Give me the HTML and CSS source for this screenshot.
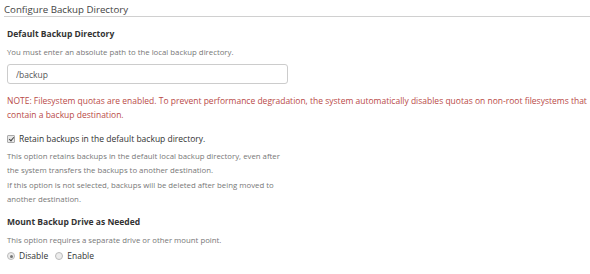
FILE: index.html
```html
<!DOCTYPE html>
<html>
  <head>
    <title>Configure Backup Directory</title>
    <link rel="stylesheet" href="styles.css">
  </head>
  <body>
    <h2 class="section-title">Configure Backup Directory</h2>

    <div class="form-group first">
      <label class="field-label" for="backupdir">Default Backup Directory</label>
      <p class="help">You must enter an absolute path to the local backup directory.</p>
      <input class="text-input" id="backupdir" type="text" value="/backup">
    </div>

    <p class="note">NOTE: Filesystem quotas are enabled. To prevent performance degradation, the system automatically disables quotas on non-root filesystems that contain a backup destination.</p>

    <div class="form-group">
      <label class="check-label">
        <input type="checkbox" checked>
        Retain backups in the default backup directory.
      </label>
      <p class="help para">This option retains backups in the default local backup directory, even after<br>the system transfers the backups to another destination.</p>
      <p class="help para next">If this option is not selected, backups will be deleted after being moved to<br>another destination.</p>
    </div>

    <div class="form-group mount">
      <label class="field-label">Mount Backup Drive as Needed</label>
      <p class="help">This option requires a separate drive or other mount point.</p>
      <div class="radios">
        <label class="radio-label"><input type="radio" name="mount" checked> Disable</label>
        <label class="radio-label"><input type="radio" name="mount"> Enable</label>
      </div>
    </div>
  </body>
</html>
```

FILE: styles.css
```css
body {
  font-family: "Open Sans", Arial, sans-serif;
  color: #333;
  background-color: #fff;
  margin: 0;
  padding: 0 0 0 4px;
}
.section-title {
  font-size: 9.7px;
  font-weight: normal;
  line-height: 13px;
  color: #444;
  margin: 0;
  padding: 3px 0 0 0;
  border-bottom: 1px solid #d0d0d0;
}
.form-group {
  padding-left: 3px;
}
.form-group.first {
  margin-top: 11px;
}
.form-group.mount {
  margin-top: 10px;
}
.field-label {
  display: block;
  font-size: 8.5px;
  line-height: 12px;
  font-weight: bold;
  color: #333;
}
.help {
  font-size: 7.8px;
  color: #777;
  margin: 6px 0 0 0;
  line-height: 12px;
}
.help.para {
  line-height: 14px;
  margin-top: 4px;
}
.help.para.next {
  margin-top: 1px;
}
.text-input {
  display: block;
  width: 281px;
  height: 20px;
  box-sizing: border-box;
  margin: 6px 0 0 0;
  padding: 0 8px;
  font-family: inherit;
  font-size: 8.5px;
  color: #555;
  border: 1px solid #ccc;
  border-radius: 3px;
}
.note {
  font-size: 8.5px;
  color: #b94a48;
  margin: 10px 0 0 3px;
  line-height: 14px;
}
.check-label {
  display: flex;
  align-items: center;
  gap: 4px;
  margin-top: 11px;
  font-size: 8.5px;
  line-height: 12px;
  color: #333;
}
.check-label input {
  appearance: none;
  width: 8px;
  height: 8px;
  margin: 0;
  border: 1px solid #aaa;
  border-radius: 1px;
  background: #e8e8e8;
  position: relative;
}
.check-label input:checked::after {
  content: "";
  position: absolute;
  left: 2px;
  top: 0;
  width: 2px;
  height: 4px;
  border: solid #444;
  border-width: 0 1px 1px 0;
  transform: rotate(40deg);
}
.radios {
  display: flex;
  gap: 7px;
  margin-top: 4px;
}
.radio-label {
  display: flex;
  align-items: center;
  gap: 4px;
  font-size: 8.5px;
  line-height: 12px;
}
.radio-label input {
  appearance: none;
  width: 8px;
  height: 8px;
  margin: 0;
  border: 1px solid #bbb;
  border-radius: 50%;
  background: #ececec;
  position: relative;
}
.radio-label input:checked::after {
  content: "";
  position: absolute;
  left: 1.5px;
  top: 1.5px;
  width: 3px;
  height: 3px;
  border-radius: 50%;
  background: #777;
}
```
